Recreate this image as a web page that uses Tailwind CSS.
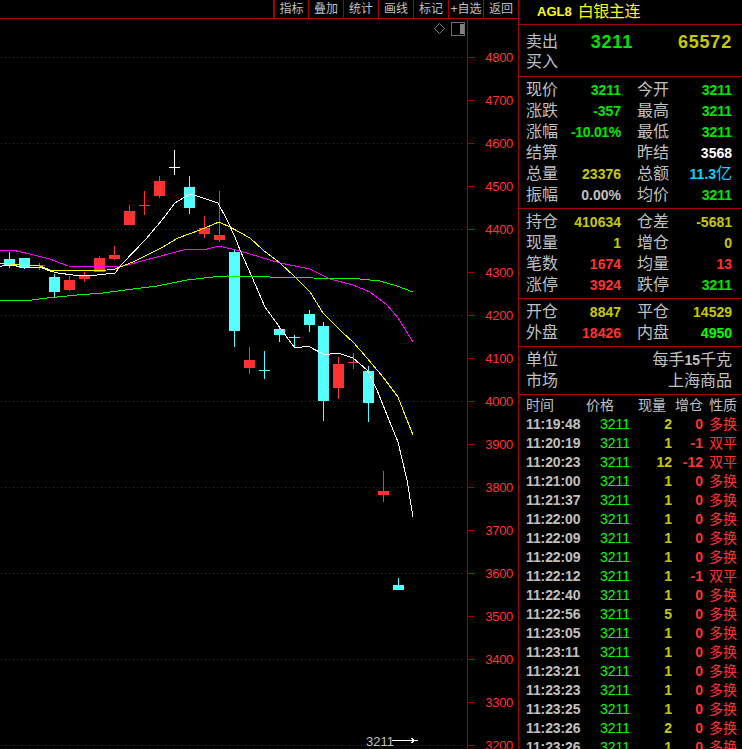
<!DOCTYPE html>
<html lang="zh-CN">
<head>
    <meta charset="UTF-8">
    <title>AGL8 白银主连</title>
    <script src="https://cdn.jsdelivr.net/npm/@tailwindcss/browser@4"></script>
</head>
<body class="bg-black [font-family:'Liberation_Sans','Noto_Sans_CJK_SC',sans-serif]">
<div class="flex w-[742px] h-[749px] overflow-hidden bg-black text-[#c0c0c0]">

    <!-- chart column -->
    <div class="flex flex-col w-[519px] shrink-0 border-r border-[#a80000]">
        <div class="flex justify-end h-[19px] shrink-0 border-b border-[#a80000] text-[12px] leading-[18px]">
            <span class="w-[35px] text-center border-l-2 border-[#a80000]">指标</span>
            <span class="w-[35px] text-center border-l border-[#a80000]">叠加</span>
            <span class="w-[35px] text-center border-l border-[#a80000]">统计</span>
            <span class="w-[35px] text-center border-l border-[#a80000]">画线</span>
            <span class="w-[35px] text-center border-l border-[#a80000]">标记</span>
            <span class="w-[35px] text-center border-l border-[#a80000] whitespace-nowrap">+自选</span>
            <span class="w-[35px] text-center border-l border-[#a80000]">返回</span>
        </div>
        <div class="flex flex-1 min-h-0">
            <svg id="chart" class="w-[467px] h-[730px] shrink-0" viewBox="0 19 467 730" shape-rendering="crispEdges"></svg>
            <div id="axis" class="flex-1 flex flex-col pt-[17px] border-l border-[#a80000] text-[#ff3232] text-[13px] tracking-[-0.3px]"></div>
        </div>
    </div>

    <!-- quote column -->
    <div class="flex flex-col flex-1 min-w-0">
        <div class="flex items-center h-[25px] shrink-0 pl-[18px] gap-[6px] border-b border-[#a80000] text-[#ffff00]">
            <span class="font-bold text-[13px]">AGL8</span>
            <span class="text-[16px] tracking-[-0.4px]">白银主连</span>
        </div>
        <div class="h-[52px] shrink-0 pt-[7px] pl-[7px] border-b border-[#a80000] text-[16px]">
            <div class="flex items-center h-[20px]">
                <span class="w-[32px]">卖出</span>
                <span class="w-[75px] text-right font-bold text-[18px] tracking-[0.8px] text-[#00e600]">3211</span>
                <span class="w-[99px] text-right font-bold text-[18px] tracking-[0.8px] text-[#c8c800]">65572</span>
            </div>
            <div class="h-[20px] leading-[20px]">买入</div>
        </div>

        <div class="h-[132px] shrink-0 pt-[1px] pl-[7px] border-b border-[#a80000] text-[16px]">
            <div class="grid grid-cols-[32px_63px_48px_63px] items-center h-[21px]"><span>现价</span><span class="text-right font-bold text-[14px] text-[#00e600]">3211</span><span class="pl-[16px]">今开</span><span class="text-right font-bold text-[14px] text-[#00e600]">3211</span></div>
            <div class="grid grid-cols-[32px_63px_48px_63px] items-center h-[21px]"><span>涨跌</span><span class="text-right font-bold text-[14px] text-[#00e600]">-357</span><span class="pl-[16px]">最高</span><span class="text-right font-bold text-[14px] text-[#00e600]">3211</span></div>
            <div class="grid grid-cols-[32px_63px_48px_63px] items-center h-[21px]"><span>涨幅</span><span class="text-right font-bold text-[14px] tracking-[-0.3px] text-[#00e600]">-10.01%</span><span class="pl-[16px]">最低</span><span class="text-right font-bold text-[14px] text-[#00e600]">3211</span></div>
            <div class="grid grid-cols-[32px_63px_48px_63px] items-center h-[21px]"><span>结算</span><span></span><span class="pl-[16px]">昨结</span><span class="text-right font-bold text-[14px] text-white">3568</span></div>
            <div class="grid grid-cols-[32px_63px_48px_63px] items-center h-[21px]"><span>总量</span><span class="text-right font-bold text-[14px] text-[#c8c800]">23376</span><span class="pl-[16px]">总额</span><span class="text-right font-bold text-[14px] text-[#00d8ff]">11.3<span class="font-normal text-[16px]">亿</span></span></div>
            <div class="grid grid-cols-[32px_63px_48px_63px] items-center h-[21px]"><span>振幅</span><span class="text-right font-bold text-[14px]">0.00%</span><span class="pl-[16px]">均价</span><span class="text-right font-bold text-[14px] text-[#00e600]">3211</span></div>
        </div>

        <div class="h-[90px] shrink-0 pt-[1px] pl-[7px] border-b border-[#a80000] text-[16px]">
            <div class="grid grid-cols-[32px_63px_48px_63px] items-center h-[21px]"><span>持仓</span><span class="text-right font-bold text-[14px] text-[#c8c800]">410634</span><span class="pl-[16px]">仓差</span><span class="text-right font-bold text-[14px] text-[#c8c800]">-5681</span></div>
            <div class="grid grid-cols-[32px_63px_48px_63px] items-center h-[21px]"><span>现量</span><span class="text-right font-bold text-[14px] text-[#c8c800]">1</span><span class="pl-[16px]">增仓</span><span class="text-right font-bold text-[14px] text-[#c8c800]">0</span></div>
            <div class="grid grid-cols-[32px_63px_48px_63px] items-center h-[21px]"><span>笔数</span><span class="text-right font-bold text-[14px] text-[#ff3232]">1674</span><span class="pl-[16px]">均量</span><span class="text-right font-bold text-[14px] text-[#ff3232]">13</span></div>
            <div class="grid grid-cols-[32px_63px_48px_63px] items-center h-[21px]"><span>涨停</span><span class="text-right font-bold text-[14px] text-[#ff3232]">3924</span><span class="pl-[16px]">跌停</span><span class="text-right font-bold text-[14px] text-[#00e600]">3211</span></div>
        </div>

        <div class="h-[48px] shrink-0 pt-[1px] pl-[7px] border-b border-[#a80000] text-[16px]">
            <div class="grid grid-cols-[32px_63px_48px_63px] items-center h-[21px]"><span>开仓</span><span class="text-right font-bold text-[14px] text-[#c8c800]">8847</span><span class="pl-[16px]">平仓</span><span class="text-right font-bold text-[14px] text-[#c8c800]">14529</span></div>
            <div class="grid grid-cols-[32px_63px_48px_63px] items-center h-[21px]"><span>外盘</span><span class="text-right font-bold text-[14px] text-[#ff3232]">18426</span><span class="pl-[16px]">内盘</span><span class="text-right font-bold text-[14px] text-[#00ff00]">4950</span></div>
        </div>

        <div class="h-[48px] shrink-0 pt-[2px] pl-[7px] pr-[10px] border-b border-[#a80000] text-[16px]">
            <div class="flex justify-between items-center h-[21px]"><span>单位</span><span>每手<span class="font-bold text-[14px]">15</span>千克</span></div>
            <div class="flex justify-between items-center h-[21px]"><span>市场</span><span>上海商品</span></div>
        </div>

        <div class="grid grid-cols-[60px_28px_52px_37px_34px] items-center h-[19px] shrink-0 pl-[7px] text-[14px]">
            <span>时间</span><span class="text-right">价格</span><span class="text-right">现量</span><span class="text-right">增仓</span><span class="text-right">性质</span>
        </div>
        <div id="ticks"></div>
    </div>
</div>

<script>
    const red = '#ff3232', cyan = '#54ffff', white = '#ffffff';

    // center x, body top, body bottom, wick top, wick bottom, colour
    const candles = [
        [9, 259, 266, 252, 268, cyan], [24, 258, 268, 258, 269, cyan], [39, 265, 266, 263, 270, red],
        [54, 277, 292, 274, 298, cyan], [69, 280, 290, 276, 291, red], [84, 276, 279, 272, 282, red],
        [99, 258, 272, 256, 272, red], [114, 255, 259, 246, 260, red], [129, 211, 225, 205, 225, red],
        [144, 205, 206, 191, 215, red], [159, 181, 196, 176, 198, red], [174, 167, 168, 150, 175, white],
        [189, 187, 208, 176, 214, cyan], [204, 228, 234, 216, 238, red], [219, 235, 240, 191, 242, red],
        [234, 252, 331, 250, 347, cyan], [249, 360, 368, 347, 374, red], [264, 370, 371, 351, 379, cyan],
        [279, 329, 335, 326, 342, cyan], [294, 337, 338, 335, 347, cyan], [309, 314, 325, 310, 332, cyan],
        [323, 326, 401, 322, 421, cyan], [338, 364, 388, 357, 399, red], [353, 362, 363, 353, 369, red],
        [368, 371, 403, 366, 422, cyan], [383, 491, 495, 471, 502, red], [398, 585, 590, 578, 590, cyan]
    ];

    const lines = {
        '#00ff00': '0,301 2,300 32,300 47,298 77,295 103,293 133,289 157,286 187,280 213,277 227,276 313,278 360,279 380,281 397,286 413,292',
        '#ff00ff': '0,250 12,250 30,254 50,259 68,266 117,267 127,265 157,257 187,249 207,249 219,246 240,251 280,263 310,269 330,279 353,285 370,292 387,305 398,318 413,342',
        '#ffff00': '0,263 20,265 40,266 53,271 107,270 115,269 133,262 163,247 178,238 200,230 219,222 230,227 250,238 263,250 280,263 295,277 310,292 323,313 342,332 353,342 367,358 383,377 398,397 405,415 413,435',
        '#ffffff': '0,267 4,265 13,265 20,267 40,267 50,271 58,273 73,275 97,275 115,273 122,264 146,239 162,220 175,203 190,194 200,197 218,203 227,220 235,237 240,250 252,277 265,307 278,325 294,347 302,347 308,346 323,354 330,354 338,353 353,358 367,370 377,390 389,420 398,442 407,480 413,517'
    };

    let svg = '';
    for (let p = 4800; p >= 3200; p -= 200) {
        const y = 57 + (4800 - p) * 0.43;
        svg += `<line x1="1" x2="465" y1="${Math.round(y) + 0.5}" y2="${Math.round(y) + 0.5}" stroke="#a80000" stroke-dasharray="1 3"/>`;
    }
    for (const [x, top, bottom, wickTop, wickBottom, colour] of candles) {
        svg += `<rect x="${x}" y="${wickTop}" width="1" height="${wickBottom - wickTop}" fill="${colour}"/>`;
        svg += `<rect x="${x - 5}" y="${top}" width="11" height="${bottom - top}" fill="${colour}"/>`;
    }
    for (const colour in lines) {
        svg += `<polyline points="${lines[colour]}" fill="none" stroke="${colour}" stroke-width="1"/>`;
    }
    // corner icons
    svg += '<path d="M439.5 23.5 L444.5 28.5 L439.5 33.5 L434.5 28.5 Z" fill="none" stroke="#808080" shape-rendering="auto"/>';
    svg += '<rect x="451.5" y="22.5" width="13" height="13" fill="none" stroke="#707070"/><rect x="460" y="24" width="4" height="10" fill="#808080"/>';
    // last price marker
    svg += '<text x="366" y="746" font-size="13" fill="#c0c0c0" shape-rendering="auto">3211</text>';
    svg += '<path d="M392 740.5 H418 M411 738 L415 740.5 L411 743" fill="none" stroke="#ffffff"/>';
    document.getElementById('chart').innerHTML = svg;

    let axis = '';
    for (let p = 4800; p >= 3200; p -= 100) {
        axis += `<div class="flex items-center justify-between h-[43px] shrink-0 pr-[5px]"><span class="w-[6px] h-px bg-[#a80000]"></span><span>${p}</span></div>`;
    }
    document.getElementById('axis').innerHTML = axis;

    const ticks = [
        ['11:19:48', 2, 0], ['11:20:19', 1, -1], ['11:20:23', 12, -12], ['11:21:00', 1, 0], ['11:21:37', 1, 0], ['11:22:00', 1, 0],
        ['11:22:09', 1, 0], ['11:22:09', 1, 0], ['11:22:12', 1, -1], ['11:22:40', 1, 0], ['11:22:56', 5, 0], ['11:23:05', 1, 0],
        ['11:23:11', 1, 0], ['11:23:21', 1, 0], ['11:23:23', 1, 0], ['11:23:25', 1, 0], ['11:23:26', 2, 0], ['11:23:26', 1, 0]
    ];
    document.getElementById('ticks').innerHTML = ticks.map(([time, volume, change]) => `
        <div class="grid grid-cols-[57px_47px_42px_31px_34px] items-center h-[19px] pl-[7px] font-bold text-[14px]">
            <span class="tracking-[-0.1px] whitespace-nowrap">${time}</span>
            <span class="text-right font-normal text-[14px] text-[#00ff00]">3211</span>
            <span class="text-right text-[#c8c800]">${volume}</span>
            <span class="text-right text-[#ff3232]">${change}</span>
            <span class="text-right font-normal text-[14px] text-[#ff3232]">${change < 0 ? '双平' : '多换'}</span>
        </div>`).join('');
</script>
</body>
</html>
